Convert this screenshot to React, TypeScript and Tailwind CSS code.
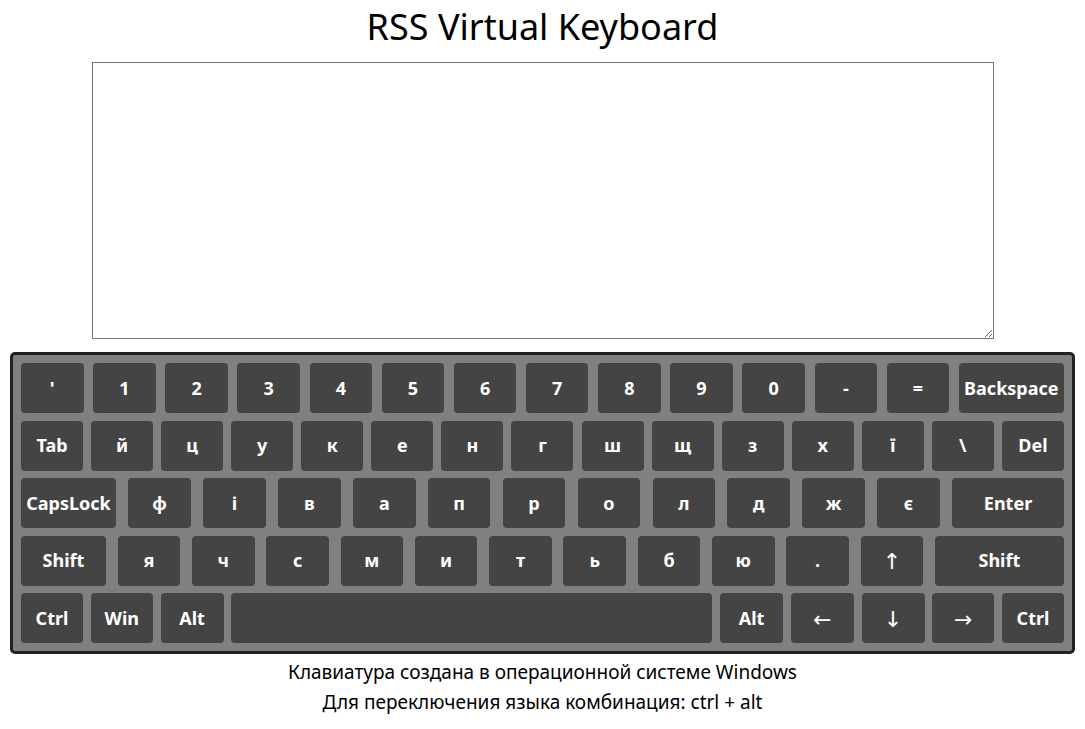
import React from "react";

type K = { l: string; w: string; arrow?: boolean };

const r1: K[] = [
  { l: "'", w: "w-[62.5px]" },
  ...["1", "2", "3", "4", "5", "6", "7", "8", "9", "0", "-", "="].map((l) => ({ l, w: "w-[62.5px]" })),
  { l: "Backspace", w: "w-[105px]" },
];
const r2: K[] = [
  "Tab", "й", "ц", "у", "к", "е", "н", "г", "ш", "щ", "з", "х", "ї", "\\", "Del",
].map((l) => ({ l, w: "w-[62px]" }));
const r3: K[] = [
  { l: "CapsLock", w: "w-[95px]" },
  ...["ф", "і", "в", "а", "п", "р", "о", "л", "д", "ж", "є"].map((l) => ({ l, w: "w-[62.5px]" })),
  { l: "Enter", w: "w-[112px]" },
];
const r4: K[] = [
  { l: "Shift", w: "w-[85px]" },
  ...["я", "ч", "с", "м", "и", "т", "ь", "б", "ю", "."].map((l) => ({ l, w: "w-[62.5px]" })),
  { l: "↑", w: "w-[62.5px]", arrow: true },
  { l: "Shift", w: "w-[129px]" },
];
const r5: K[] = [
  { l: "Ctrl", w: "w-[62px]" },
  { l: "Win", w: "w-[62px]" },
  { l: "Alt", w: "w-[63px]" },
  { l: "", w: "w-[481px]" },
  { l: "Alt", w: "w-[63px]" },
  { l: "←", w: "w-[63px]", arrow: true },
  { l: "↓", w: "w-[63px]", arrow: true },
  { l: "→", w: "w-[62px]", arrow: true },
  { l: "Ctrl", w: "w-[62px]" },
];

function Row({ keys }: { keys: K[] }) {
  return (
    <div className="flex justify-between h-[50px]">
      {keys.map((k, i) => (
        <div
          key={i}
          className={`${k.w} h-[50px] rounded-[4px] bg-[#444444] text-white flex items-center justify-center ${
            k.arrow ? "text-[22px] font-normal" : "text-[18px] font-bold"
          }`}
        >
          {k.l}
        </div>
      ))}
    </div>
  );
}

export default function App() {
  return (
    <div
      className="w-[1085px] h-[729px] bg-white flex flex-col items-center text-black"
      style={{ fontFamily: "'Noto Sans', 'DejaVu Sans', sans-serif" }}
    >
      <h1 className="mt-[2px] text-[36px] leading-[50px] font-normal">RSS Virtual Keyboard</h1>
      <textarea className="mt-[10px] block w-[902px] h-[277px] border border-[#767676] bg-white" />
      <div className="mt-[13px] w-[1065px] border-[3px] border-[#222222] rounded-[5px] bg-[#808080] p-[8px] flex flex-col gap-[7.5px]">
        <Row keys={r1} />
        <Row keys={r2} />
        <Row keys={r3} />
        <Row keys={r4} />
        <Row keys={r5} />
      </div>
      <p className="mt-[3px] text-[19px] leading-[30px]">Клавиатура создана в операционной системе Windows</p>
      <p className="text-[19px] leading-[30px]">Для переключения языка комбинация: ctrl + alt</p>
    </div>
  );
}
